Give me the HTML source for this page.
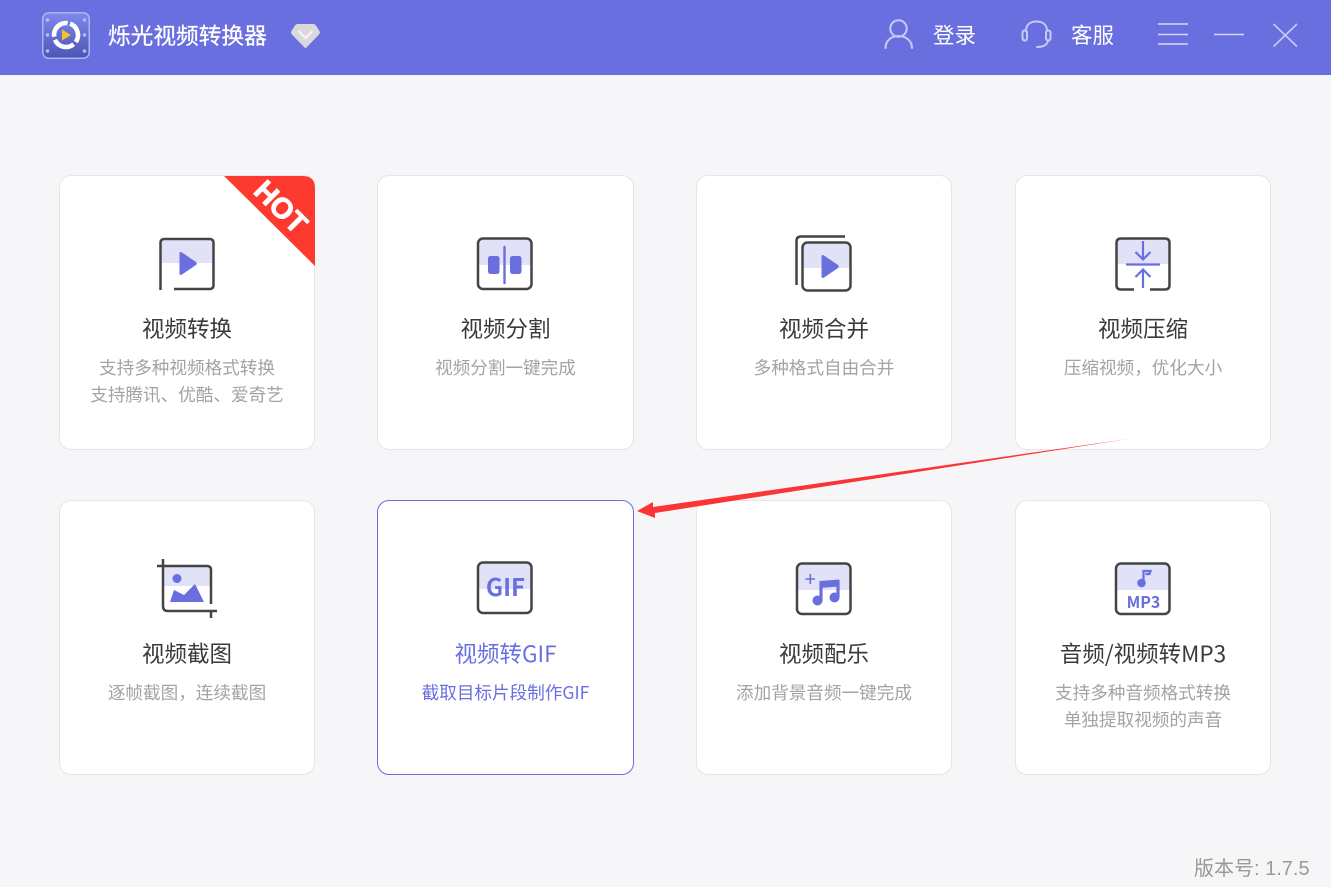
<!DOCTYPE html>
<html lang="zh-CN">
<head>
<meta charset="utf-8">
<style>
html,body{margin:0;padding:0;width:1331px;height:887px;overflow:hidden;background:#f6f6f9}
body{position:relative;font-family:"Noto Sans CJK SC","Liberation Sans",sans-serif}
.hd{position:absolute;left:0;top:0;width:1331px;height:75px;background:#6a6fdf}
.t{position:absolute;white-space:nowrap}
.hw{-webkit-text-stroke:.25px #fff}
.card{position:absolute;width:254px;height:273px;background:#fff;border:1px solid #e6e6ea;border-radius:12px;box-sizing:content-box}
.card.on{border-color:#6a6fdf;width:255px}
.w2{width:255px}
.ti{position:absolute;left:0;right:0;top:136px;height:32px;line-height:32px;text-align:center;font-size:22.5px;color:#3a3a3a}
.su{position:absolute;left:0;right:0;top:178px;line-height:27px;text-align:center;font-size:17.6px;color:#a3a3a3}
.on .ti,.on .su{color:#6a6fdf}
svg{position:absolute;left:0;top:0}
</style>
</head>
<body>
<div class="hd"></div>
<div class="t hw" style="left:108px;top:18px;font-size:22.7px;line-height:34px;color:#fff">烁光视频转换器</div>
<div class="t" style="left:933px;top:19px;font-size:21.5px;line-height:32px;color:#fff">登录</div>
<div class="t" style="left:1071px;top:19px;font-size:21.5px;line-height:32px;color:#fff">客服</div>

<div class="card" style="left:59px;top:175px"><div class="ti">视频转换</div><div class="su">支持多种视频格式转换<br>支持腾讯、优酷、爱奇艺</div></div>
<div class="card w2" style="left:377px;top:175px"><div class="ti">视频分割</div><div class="su">视频分割一键完成</div></div>
<div class="card" style="left:696px;top:175px"><div class="ti">视频合并</div><div class="su">多种格式自由合并</div></div>
<div class="card" style="left:1015px;top:175px"><div class="ti">视频压缩</div><div class="su">压缩视频，优化大小</div></div>
<div class="card" style="left:59px;top:500px"><div class="ti">视频截图</div><div class="su">逐帧截图，连续截图</div></div>
<div class="card on" style="left:377px;top:500px"><div class="ti">视频转GIF</div><div class="su">截取目标片段制作GIF</div></div>
<div class="card" style="left:696px;top:500px"><div class="ti">视频配乐</div><div class="su">添加背景音频一键完成</div></div>
<div class="card" style="left:1015px;top:500px"><div class="ti">音频/视频转MP3</div><div class="su">支持多种音频格式转换<br>单独提取视频的声音</div></div>

<div class="t" style="left:1194px;top:854px;font-size:20px;line-height:30px;color:#999;font-family:'Liberation Sans','Noto Sans CJK SC',sans-serif">版本号: 1.7.5</div>

<svg width="1331" height="887" viewBox="0 0 1331 887" fill="none">
<defs>
<linearGradient id="lg" x1="0" y1="0" x2="0" y2="1"><stop offset="0" stop-color="#7f88ee"/><stop offset="1" stop-color="#4d55b4"/></linearGradient>
</defs>
<!-- logo -->
<rect x="42.750" y="12.750" width="46.500" height="45.500" rx="6" fill="url(#lg)" stroke="#aeb3f3" stroke-width="1.500"/>
<g fill="#b4baf2"><circle cx="47.500" cy="20" r="1.800"/><circle cx="47.500" cy="35" r="1.800"/><circle cx="47.500" cy="51" r="1.800"/><circle cx="84.500" cy="20" r="1.800"/><circle cx="84.500" cy="35" r="1.800"/><circle cx="84.500" cy="51" r="1.800"/></g>
<circle cx="66" cy="35" r="12" stroke="#fff" stroke-width="4.600" stroke-dasharray="22 3.130" transform="rotate(-70 66 35)"/>
<path d="M62 29.500L71 35L62 40.500Z" fill="#f6c12f"/>
<!-- diamond -->
<path d="M297.500 24H313.500Q315 24 316 25.500L319.500 31Q320.500 33 319 34.500L306.500 47.500Q305.500 48.500 304.500 47.500L292 34.500Q290.500 33 291.500 31L295 25.500Q296 24 297.500 24Z" fill="#d9d9dc"/>
<path d="M298.500 31L305.500 38L312.500 31" stroke="#f4f4f6" stroke-width="2.200"/>
<!-- user -->
<g stroke="#c7caf4" stroke-width="2">
<circle cx="898.500" cy="28.500" r="8.200"/>
<path d="M885.500 48C885.500 41 891 36 898.500 36C906 36 912 41 912 48" stroke-linecap="round"/>
<!-- headset -->
<path d="M1026 31C1026 24 1031 21.500 1036.500 21.500C1042 21.500 1047 24 1047 31"/>
<rect x="1022.500" y="30.500" width="4.500" height="10" rx="2.200"/>
<rect x="1046" y="30.500" width="4.500" height="10" rx="2.200"/>
<path d="M1048 41C1047 45 1043 47 1037 47" stroke-linecap="round"/>
</g>
<!-- window controls -->
<g stroke="#d6d8f7" stroke-width="1.600">
<path d="M1158 24H1188M1158 34.500H1188M1158 44H1188"/>
<path d="M1214 34.500H1244"/>
<path d="M1273.500 24L1297 46.500M1297 24L1273.500 46.500" stroke="#c9cbf5"/>
</g>

<!-- HOT -->
<path d="M224 176H303Q315 176 315 188V266Z" fill="#fe3a2e"/>
<text x="281" y="217" transform="rotate(45 281 207)" text-anchor="middle" font-family="Liberation Sans" font-weight="700" font-size="29" fill="#fff" stroke="#fff" stroke-width=".8">HOT</text>

<!-- icon 1 -->
<path d="M161 263V243Q161 239 165 239H209Q213 239 213 243V263Z" fill="#e1e2f8"/>
<path d="M179.500 253.500Q179.500 251 182 252.500L196 262Q197.500 263.500 196 265L182 274.500Q179.500 276 179.500 273Z" fill="#6a6fdf"/>
<path d="M160.500 290V243Q160.500 239 164.500 239H209.500Q213.500 239 213.500 243V285Q213.500 289 209.500 289H174" stroke="#444" stroke-width="2.500"/>

<!-- icon 2 -->
<path d="M479 265V243Q479 239 483 239H527Q531 239 531 243V265Z" fill="#e1e2f8"/>
<rect x="488" y="256" width="11.500" height="18" rx="2.500" fill="#6a6fdf"/>
<rect x="510" y="256" width="11.500" height="18" rx="2.500" fill="#6a6fdf"/>
<path d="M504.500 247V283" stroke="#6a6fdf" stroke-width="2.400" stroke-linecap="round"/>
<rect x="478" y="238.500" width="53.500" height="50.500" rx="5" stroke="#444" stroke-width="2.500"/>

<!-- icon 3 -->
<path d="M803 268V247Q803 243 807 243H846Q850 243 850 247V268Z" fill="#e1e2f8"/>
<path d="M821.500 256.500Q821.500 254 824 255.500L838 265Q839.500 266.500 838 268L824 277.500Q821.500 279 821.500 276Z" fill="#6a6fdf"/>
<path d="M796.500 285V241Q796.500 236.500 801 236.500H845" stroke="#444" stroke-width="2.500"/>
<rect x="802.500" y="242.500" width="48" height="48" rx="5" stroke="#444" stroke-width="2.500"/>

<!-- icon 4 -->
<path d="M1117 264V243Q1117 239 1121 239H1165Q1169 239 1169 243V264Z" fill="#e1e2f8"/>
<path d="M1126 264.500H1160" stroke="#6a6fdf" stroke-width="2.200"/>
<path d="M1143 241V259M1135.500 252L1143 259.500L1150.500 252M1143 288V270M1135.500 277L1143 269.500L1150.500 277" stroke="#6a6fdf" stroke-width="2.200"/>
<path d="M1134 289.500H1121Q1116.500 289.500 1116.500 285V243Q1116.500 238.500 1121 238.500H1165Q1169.500 238.500 1169.500 243V285Q1169.500 289.500 1165 289.500H1150" stroke="#444" stroke-width="2.500"/>

<!-- icon 5 -->
<path d="M164 586V567H207Q211 567 211 571V586Z" fill="#e1e2f8"/>
<circle cx="177" cy="578.500" r="4.500" fill="#6a6fdf"/>
<path d="M170 602L174 590L184 595L195 584L204 602Z" fill="#6a6fdf"/>
<path d="M157 566H207Q211 566 211 570V604" stroke="#444" stroke-width="2.500"/>
<path d="M163 559V606Q163 611 168 611H217M211 611V618" stroke="#444" stroke-width="2.500"/>

<!-- icon 6 -->
<path d="M479 589V568Q479 563 483 563H527Q531 563 531 568V589Z" fill="#e1e2f8"/>
<text x="505.500" y="596" text-anchor="middle" font-family="Noto Sans CJK SC" font-weight="700" font-size="24" fill="#6a6fdf">GIF</text>
<rect x="478" y="562.500" width="53.500" height="50.500" rx="5" stroke="#444" stroke-width="2.500"/>

<!-- icon 7 -->
<path d="M798 590V568Q798 564 802 564H846Q850 564 850 568V590Z" fill="#e1e2f8"/>
<path d="M805.500 579H815M810.300 574V584" stroke="#6a6fdf" stroke-width="1.600"/>
<path d="M821 601V583M838 597V581" stroke="#6a6fdf" stroke-width="3.200"/>
<path d="M819.500 581L839.500 579.500V586.500L819.500 588Z" fill="#6a6fdf"/>
<circle cx="817.500" cy="600.500" r="5" fill="#6a6fdf"/>
<circle cx="834.500" cy="597.500" r="5" fill="#6a6fdf"/>
<rect x="797" y="563.500" width="53.500" height="50.500" rx="5" stroke="#444" stroke-width="2.500"/>

<!-- icon 8 -->
<path d="M1117 590V568Q1117 564 1121 564H1165Q1169 564 1169 568V590Z" fill="#e1e2f8"/>
<path d="M1143.500 584V571H1150.500L1149.500 574H1145.500" stroke="#6a6fdf" stroke-width="2.200"/>
<circle cx="1141.500" cy="583" r="4.300" fill="#6a6fdf"/>
<text x="1143.500" y="608" text-anchor="middle" font-family="Noto Sans CJK SC" font-weight="700" font-size="16" fill="#6a6fdf">MP3</text>
<rect x="1116" y="563.500" width="53.500" height="50.500" rx="5" stroke="#444" stroke-width="2.500"/>

<!-- arrow -->
<path d="M637 511L653 502L653 507L1128 439L655 513L655 518Z" fill="#fb3535"/>
</svg>
</body>
</html>
